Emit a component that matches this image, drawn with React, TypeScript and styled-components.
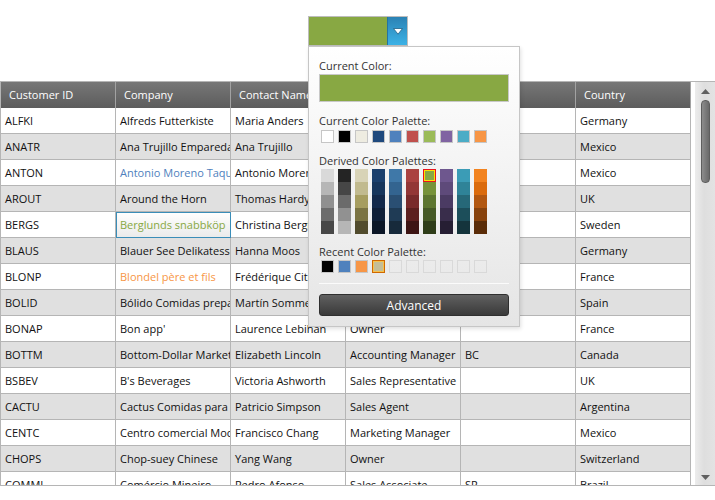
import React from 'react';
import styled, { createGlobalStyle } from 'styled-components';

const GlobalStyle = createGlobalStyle`
  html, body { margin: 0; padding: 0; background: #ffffff; }
  body { font-family: "Open Sans", "Noto Sans", sans-serif; }
  * { box-sizing: border-box; }
`;

const Page = styled.div`
  width: 715px;
  height: 500px;
  display: flex;
  flex-direction: column;
  overflow: hidden;
`;

const Toolbar = styled.div`
  height: 81px;
  display: flex;
  justify-content: center;
  padding-top: 16px;
  position: relative;
  z-index: 2;
`;

const PickerAnchor = styled.div`
  position: relative;
  height: 30px;
  margin-left: 1px;
`;

const PickerButton = styled.div`
  display: flex;
  width: 100px;
  height: 30px;
  border: 1px solid #bdbdbd;
  background: #ffffff;
`;

const ColorFace = styled.div<{ $color: string }>`
  flex: 1;
  background: ${(p) => p.$color};
`;

const DropToggle = styled.div`
  width: 20px;
  border-left: 1px solid #2473a2;
  background: linear-gradient(#2b82b4, #3cb2e6);
  display: flex;
  align-items: center;
  justify-content: center;
`;

const Popup = styled.div`
  position: absolute;
  top: 100%;
  left: 0;
  width: 212px;
  border: 1px solid #c6c6c6;
  background: linear-gradient(#ffffff, #e5e5e5);
  box-shadow: 1px 2px 4px rgba(0, 0, 0, 0.12);
  padding: 11px 10px 10px;
  display: flex;
  flex-direction: column;
`;

const Label = styled.div<{ $gap?: number }>`
  font-size: 11px;
  line-height: 16px;
  color: #333333;
  margin-top: ${(p) => p.$gap ?? 0}px;
`;

const CurrentSwatch = styled.div<{ $color: string }>`
  height: 28px;
  border: 1px solid #c8c8c8;
  background: ${(p) => p.$color};
`;

const SwatchRow = styled.div<{ $gap?: number }>`
  display: flex;
  gap: 4px;
  padding-left: 2px;
  margin-top: ${(p) => p.$gap ?? 0}px;
`;

const Swatch = styled.div<{ $color?: string; $selected?: boolean }>`
  width: 13px;
  height: 13px;
  border: 1px solid ${(p) => (p.$selected ? '#d06800' : p.$color ? '#c6c6c6' : '#d9d9d9')};
  background: ${(p) => p.$color ?? 'transparent'};
  box-shadow: ${(p) => (p.$selected ? 'inset 0 0 0 1px #f3c24e' : 'none')};
`;

const DerivedGrid = styled.div`
  display: flex;
  gap: 4px;
  padding-left: 2px;
`;

const DerivedColumn = styled.div`
  display: flex;
  flex-direction: column;
`;

const DerivedCell = styled.div<{ $color: string; $selected?: boolean }>`
  width: 13px;
  height: 13px;
  background: ${(p) => p.$color};
  border: ${(p) => (p.$selected ? '1px solid #e8141c' : 'none')};
  box-shadow: ${(p) => (p.$selected ? 'inset 0 0 0 1px #ffe100' : 'none')};
`;

const Separator = styled.div`
  height: 1px;
  margin-top: 10px;
  background: #fbfbfb;
`;

const AdvancedButton = styled.div`
  height: 22px;
  margin-top: 10px;
  border: 1px solid #2f2f2f;
  border-radius: 3px;
  background: linear-gradient(#606060, #3a3a3a);
  color: #ffffff;
  font-size: 12px;
  display: flex;
  align-items: center;
  justify-content: center;
`;

const Grid = styled.div`
  display: flex;
  height: 405px;
  border-top: 1px solid #b5b5b5;
  border-bottom: 1px solid #b5b5b5;
`;

const GridMain = styled.div`
  width: 691px;
  border-left: 1px solid #b5b5b5;
  display: flex;
  flex-direction: column;
  overflow: hidden;
`;

const HeaderRow = styled.div`
  display: grid;
  grid-template-columns: repeat(6, 115px);
  height: 26px;
  flex: none;
  background: linear-gradient(#777777, #5c5c5c);
`;

const HeaderCell = styled.div`
  border-right: 1px solid #a2a2a2;
  padding-left: 8px;
  color: #ffffff;
  font-size: 11px;
  line-height: 26px;
  white-space: nowrap;
  overflow: hidden;
`;

const Body = styled.div`
  flex: 1;
  overflow: hidden;
`;

const Row = styled.div<{ $alt: boolean }>`
  display: grid;
  grid-template-columns: repeat(6, 115px);
  height: 26px;
  background: ${(p) => (p.$alt ? '#e0e0e0' : '#ffffff')};
`;

const Cell = styled.div<{ $color?: string; $current?: boolean }>`
  border-right: 1px solid ${(p) => (p.$current ? '#3a8db8' : '#b5b5b5')};
  border-bottom: 1px solid ${(p) => (p.$current ? '#3a8db8' : '#b5b5b5')};
  box-shadow: ${(p) => (p.$current ? 'inset 1px 1px 0 #3a8db8' : 'none')};
  background: ${(p) => (p.$current ? 'linear-gradient(#ffffff, #ebebeb)' : 'transparent')};
  padding-left: 4px;
  font-size: 11px;
  line-height: 26px;
  color: ${(p) => p.$color ?? '#111111'};
  white-space: nowrap;
  overflow: hidden;
`;

const Gutter = styled.div`
  width: 4px;
  background: #ffffff;
`;

const ScrollBar = styled.div`
  width: 20px;
  background: linear-gradient(90deg, #ececec, #dedede 45%, #e3e3e3);
  display: flex;
  flex-direction: column;
  align-items: center;
  padding: 7px 0 5px;
`;

const Thumb = styled.div`
  width: 9px;
  height: 83px;
  margin-top: 6px;
  border: 1px solid #5e5e5e;
  border-radius: 4px;
  background: linear-gradient(90deg, #8c8c8c, #6a6a6a);
`;

const Spacer = styled.div`
  flex: 1;
`;

const Arrow = ({ down }: { down?: boolean }) => (
  <svg width="9" height="5" viewBox="0 0 9 5">
    <polygon points={down ? '0,0 9,0 4.5,5' : '0,5 9,5 4.5,0'} fill="#606060" />
  </svg>
);

const palette = ['#ffffff', '#000000', '#eeece1', '#1f497d', '#4f81bd', '#c0504d', '#9bbb59', '#8064a2', '#4bacc6', '#f79646'];

const derived: string[][] = [
  ['#d9d9d9', '#b6b6b6', '#909090', '#6c6c6c', '#474747'],
  ['#242424', '#464646', '#6b6b6b', '#919191', '#b6b6b6'],
  ['#d8d3b7', '#c1ba8f', '#a69d60', '#7b7444', '#514b2d'],
  ['#1b406d', '#17365c', '#13294a', '#0f1f37', '#0b1626'],
  ['#3f78a8', '#336490', '#2a4f73', '#1f3b55', '#172a3b'],
  ['#aa4240', '#933736', '#792b2b', '#5c201f', '#3d1514'],
  ['#88a843', '#77923a', '#5d7530', '#465926', '#2f3d19'],
  ['#6e578e', '#5e4a7a', '#4b3b63', '#392d4b', '#261e33'],
  ['#3b9cb6', '#2f8398', '#266878', '#1c4e5a', '#14343c'],
  ['#f2831f', '#db6b0c', '#b25710', '#87420c', '#5a2c08'],
];

const recent: (string | undefined)[] = ['#000000', '#4f81bd', '#f79646', '#c4bd97', undefined, undefined, undefined, undefined, undefined, undefined];

const headers = ['Customer ID', 'Company', 'Contact Name', 'Contact Title', 'Region', 'Country'];

type Customer = { id: string; company: string; contact: string; title: string; region: string; country: string; color?: string; current?: boolean };

const customers: Customer[] = [
  { id: 'ALFKI', company: 'Alfreds Futterkiste', contact: 'Maria Anders', title: 'Sales Representative', region: '', country: 'Germany' },
  { id: 'ANATR', company: 'Ana Trujillo Emparedados y helados', contact: 'Ana Trujillo', title: 'Owner', region: '', country: 'Mexico' },
  { id: 'ANTON', company: 'Antonio Moreno Taquería', contact: 'Antonio Moreno', title: 'Owner', region: '', country: 'Mexico', color: '#4f81bd' },
  { id: 'AROUT', company: 'Around the Horn', contact: 'Thomas Hardy', title: 'Sales Representative', region: '', country: 'UK' },
  { id: 'BERGS', company: 'Berglunds snabbköp', contact: 'Christina Berglund', title: 'Order Administrator', region: '', country: 'Sweden', color: '#88a843', current: true },
  { id: 'BLAUS', company: 'Blauer See Delikatessen', contact: 'Hanna Moos', title: 'Sales Representative', region: '', country: 'Germany' },
  { id: 'BLONP', company: 'Blondel père et fils', contact: 'Frédérique Citeaux', title: 'Marketing Manager', region: '', country: 'France', color: '#f79646' },
  { id: 'BOLID', company: 'Bólido Comidas preparadas', contact: 'Martín Sommer', title: 'Owner', region: '', country: 'Spain' },
  { id: 'BONAP', company: "Bon app'", contact: 'Laurence Lebihan', title: 'Owner', region: '', country: 'France' },
  { id: 'BOTTM', company: 'Bottom-Dollar Markets', contact: 'Elizabeth Lincoln', title: 'Accounting Manager', region: 'BC', country: 'Canada' },
  { id: 'BSBEV', company: "B's Beverages", contact: 'Victoria Ashworth', title: 'Sales Representative', region: '', country: 'UK' },
  { id: 'CACTU', company: 'Cactus Comidas para llevar', contact: 'Patricio Simpson', title: 'Sales Agent', region: '', country: 'Argentina' },
  { id: 'CENTC', company: 'Centro comercial Moctezuma', contact: 'Francisco Chang', title: 'Marketing Manager', region: '', country: 'Mexico' },
  { id: 'CHOPS', company: 'Chop-suey Chinese', contact: 'Yang Wang', title: 'Owner', region: '', country: 'Switzerland' },
  { id: 'COMMI', company: 'Comércio Mineiro', contact: 'Pedro Afonso', title: 'Sales Associate', region: 'SP', country: 'Brazil' },
];

export default function App() {
  return (
    <Page>
      <GlobalStyle />
      <Toolbar>
        <PickerAnchor>
          <PickerButton>
            <ColorFace $color="#88a843" />
            <DropToggle>
              <svg width="10" height="7" viewBox="0 0 10 7">
                <polygon points="0.5,0.5 9.5,0.5 5,6.2" fill="#ffffff" stroke="#1d5f86" strokeWidth="0.8" />
              </svg>
            </DropToggle>
          </PickerButton>
          <Popup>
            <Label>Current Color:</Label>
            <CurrentSwatch $color="#88a843" />
            <Label $gap={11}>Current Color Palette:</Label>
            <SwatchRow $gap={1}>
              {palette.map((c) => (
                <Swatch key={c} $color={c} />
              ))}
            </SwatchRow>
            <Label $gap={10}>Derived Color Palettes:</Label>
            <DerivedGrid>
              {derived.map((col, i) => (
                <DerivedColumn key={i}>
                  {col.map((c, j) => (
                    <DerivedCell key={j} $color={c} $selected={i === 6 && j === 0} />
                  ))}
                </DerivedColumn>
              ))}
            </DerivedGrid>
            <Label $gap={10}>Recent Color Palette:</Label>
            <SwatchRow>
              {recent.map((c, i) => (
                <Swatch key={i} $color={c} $selected={i === 3} />
              ))}
            </SwatchRow>
            <Separator />
            <AdvancedButton>Advanced</AdvancedButton>
          </Popup>
        </PickerAnchor>
      </Toolbar>
      <Grid>
        <GridMain>
          <HeaderRow>
            {headers.map((h) => (
              <HeaderCell key={h}>{h}</HeaderCell>
            ))}
          </HeaderRow>
          <Body>
            {customers.map((c, i) => (
              <Row key={c.id} $alt={i % 2 === 1}>
                <Cell>{c.id}</Cell>
                <Cell $color={c.color} $current={c.current}>{c.company}</Cell>
                <Cell>{c.contact}</Cell>
                <Cell>{c.title}</Cell>
                <Cell>{c.region}</Cell>
                <Cell>{c.country}</Cell>
              </Row>
            ))}
          </Body>
        </GridMain>
        <Gutter />
        <ScrollBar>
          <Arrow />
          <Thumb />
          <Spacer />
          <Arrow down />
        </ScrollBar>
      </Grid>
    </Page>
  );
}
